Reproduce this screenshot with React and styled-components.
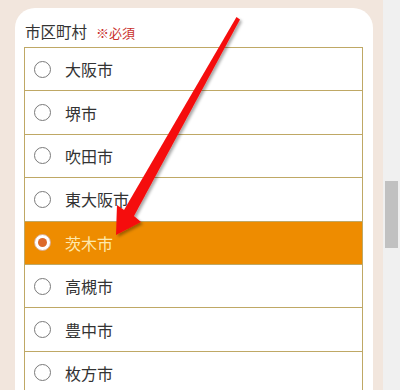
import React from 'react'
import styled, { createGlobalStyle } from 'styled-components'

const GlobalStyle = createGlobalStyle`
  html, body {
    margin: 0;
    padding: 0;
    overflow: hidden;
    background: #f2e6dd;
  }
  body {
    font-family: "Noto Sans CJK JP", "Noto Sans", sans-serif;
  }
`

const Page = styled.div`
  display: flex;
  width: 400px;
  height: 390px;
  overflow: hidden;
  position: relative;
`

const Main = styled.div`
  width: 383px;
  background: #f2e6dd;
  padding: 8px 10px 0 15px;
  box-sizing: border-box;
`

const ScrollTrack = styled.div`
  width: 17px;
  background: #f0f0f0;
  display: flex;
  justify-content: center;
`

const ScrollThumb = styled.div`
  width: 13px;
  height: 67px;
  margin-top: 181px;
  background: #c1c1c1;
`

const Card = styled.div`
  background: #fff;
  border-radius: 20px 20px 0 0;
  padding: 12px 10px 0 9px;
  height: 420px;
`

const Label = styled.div`
  display: flex;
  align-items: baseline;
  gap: 9px;
  height: 22px;
  line-height: 22px;
  margin-bottom: 5px;
  padding-left: 1px;
  font-size: 15.5px;
  color: #333;
`

const Required = styled.span`
  font-size: 13px;
  color: #c9302c;
`

const List = styled.div`
  border: 1px solid #bfa865;
  border-bottom: none;
`

const Row = styled.label`
  display: flex;
  align-items: center;
  height: 42.4px;
  border-bottom: 1px solid #bfa865;
  padding-left: 9px;
  background: ${p => (p.$active ? '#ee8c00' : '#fff')};
  color: ${p => (p.$active ? '#fde9ad' : '#333')};
  font-size: 16px;
`

const Radio = styled.span`
  width: 17px;
  height: 17px;
  box-sizing: border-box;
  border-radius: 50%;
  border: 1px solid ${p => (p.$checked ? '#d9a98a' : '#7a7a7a')};
  background: #fff;
  margin-right: 14px;
  flex-shrink: 0;
  display: flex;
  align-items: center;
  justify-content: center;

  &::after {
    content: '';
    display: ${p => (p.$checked ? 'block' : 'none')};
    width: 9px;
    height: 9px;
    border-radius: 50%;
    background: #dd6a2a;
  }
`

const Arrow = styled.svg`
  position: absolute;
  left: 0;
  top: 0;
  pointer-events: none;
`

const cities = ['大阪市', '堺市', '吹田市', '東大阪市', '茨木市', '高槻市', '豊中市', '枚方市']

export default function App() {
  return (
    <Page>
      <GlobalStyle />
      <Main>
        <Card>
          <Label>
            市区町村<Required>※必須</Required>
          </Label>
          <List>
            {cities.map(c => (
              <Row key={c} $active={c === '茨木市'}>
                <Radio $checked={c === '茨木市'} />
                {c}
              </Row>
            ))}
          </List>
        </Card>
      </Main>
      <ScrollTrack>
        <ScrollThumb />
      </ScrollTrack>
      <Arrow width="400" height="390" viewBox="0 0 400 390">
        <defs>
          <filter id="sh" x="-20%" y="-20%" width="140%" height="140%">
            <feDropShadow dx="2" dy="2" stdDeviation="1.5" floodColor="#000" floodOpacity="0.35" />
          </filter>
        </defs>
        <polygon
          points="236.5,17 240,19.5 134,216 141,222 116,235 117,205 124,210"
          fill="#f50d0d"
          filter="url(#sh)"
        />
      </Arrow>
    </Page>
  )
}
